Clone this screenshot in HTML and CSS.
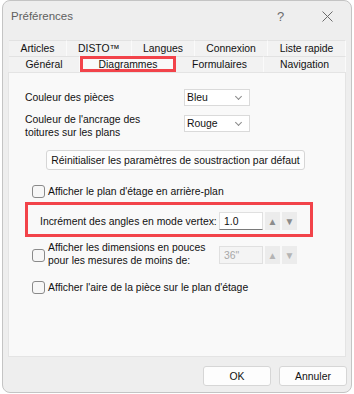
FILE: index.html
```html
<!DOCTYPE html>
<html>
<head>
    <title>Préférences</title>
    <link rel="stylesheet" href="styles.css">
</head>
<body>
    <div class="dialog">
        <div class="titlebar">
            <span class="title">Préférences</span>
            <span class="help">?</span>
            <span class="close">
                <svg width="11" height="11" viewBox="0 0 11 11"><path d="M0.5 0.5 L10.5 10.5 M10.5 0.5 L0.5 10.5" stroke="#6b6b6b" stroke-width="1" fill="none"/></svg>
            </span>
        </div>

        <div class="tabs">
            <div class="tab-row">
                <div class="tab w58">Articles</div>
                <div class="tab w65">DISTO™</div>
                <div class="tab w63">Langues</div>
                <div class="tab w73">Connexion</div>
                <div class="tab w78">Liste rapide</div>
            </div>
            <div class="tab-row">
                <div class="tab w71">Général</div>
                <div class="tab w96 active">Diagrammes</div>
                <div class="tab w88">Formulaires</div>
                <div class="tab w82">Navigation</div>
            </div>
        </div>

        <div class="panel">
            <div class="row row-first">
                <div class="label">Couleur des pièces</div>
                <div class="select">Bleu<span class="chev"></span></div>
            </div>
            <div class="row row-two">
                <div class="label">Couleur de l'ancrage des<br>toitures sur les plans</div>
                <div class="select">Rouge<span class="chev"></span></div>
            </div>
            <div class="btn-row">
                <div class="btn reset">Réinitialiser les paramètres de soustraction par défaut</div>
            </div>
            <div class="check check-one">
                <span class="box"></span>
                <span>Afficher le plan d'étage en arrière-plan</span>
            </div>
            <div class="highlight">
                <span class="spin-label">Incrément des angles en mode vertex:</span>
                <div class="spin-input">1.0</div>
                <div class="spin-btn">▲</div>
                <div class="spin-btn">▼</div>
            </div>
            <div class="check check-two">
                <span class="box"></span>
                <span class="two-lines">Afficher les dimensions en pouces<br>pour les mesures de moins de:</span>
                <div class="spin-input disabled">36"</div>
                <div class="spin-btn disabled">▲</div>
                <div class="spin-btn disabled">▼</div>
            </div>
            <div class="check check-three">
                <span class="box"></span>
                <span>Afficher l'aire de la pièce sur le plan d'étage</span>
            </div>
        </div>

        <div class="footer">
            <div class="btn footer-btn">OK</div>
            <div class="btn footer-btn">Annuler</div>
        </div>
    </div>
</body>
</html>
```

FILE: styles.css
```css
body {
    margin: 0;
    background: #ffffff;
    font-family: "Liberation Sans", Arial, sans-serif;
    font-size: 10.4px;
    color: #111111;
}
.dialog {
    margin: 0 2px;
    width: 348px;
    height: 391px;
    border: 1px solid #c4c4c4;
    border-radius: 8px;
    background: #eeeeee;
    overflow: hidden;
}
.titlebar {
    height: 30px;
    display: flex;
    align-items: center;
}
.title {
    margin-left: 8px;
    font-size: 11.5px;
    color: #606060;
    flex: 1;
}
.help {
    font-size: 13px;
    color: #6b6b6b;
    width: 10px;
    margin-right: 35px;
}
.close {
    display: flex;
    margin-right: 18px;
}
.tabs {
    margin: 9px 0 0 6px;
}
.tab-row {
    display: flex;
    height: 16px;
}
.tab {
    box-sizing: border-box;
    display: flex;
    align-items: center;
    justify-content: center;
    background: #f2f2f2;
    border-right: 1px solid #fafafa;
    border-top: 1px solid #e2e2e2;
}
.tab.active {
    background: #f9f9f9;
    border: 3px solid #f2434a;
    position: relative;
    z-index: 1;
}
.w58 { width: 58px; }
.w65 { width: 65px; }
.w63 { width: 63px; }
.w73 { width: 73px; }
.w78 { width: 78px; }
.w71 { width: 71px; }
.w96 { width: 96px; }
.w88 { width: 88px; }
.w82 { width: 82px; }

.panel {
    box-sizing: border-box;
    margin-left: 5px;
    width: 338px;
    height: 285px;
    background: #f9f9f9;
    border: 1px solid #e4e4e4;
    padding-left: 16px;
}
.row {
    display: flex;
    align-items: center;
}
.row-first {
    margin-top: 16px;
    height: 17px;
}
.row-two {
    margin-top: 7px;
    align-items: flex-start;
    line-height: 13px;
}
.row-two .select {
    margin-top: 2px;
}
.label {
    width: 159px;
}
.select {
    box-sizing: border-box;
    width: 66px;
    height: 17px;
    background: #ffffff;
    border: 1px solid #dadada;
    display: flex;
    align-items: center;
    padding-left: 2px;
    position: relative;
}
.chev {
    position: absolute;
    right: 8px;
    top: 4px;
    width: 4px;
    height: 4px;
    border-right: 1px solid #8a8a8a;
    border-bottom: 1px solid #8a8a8a;
    transform: rotate(45deg);
}
.btn-row {
    margin-top: 11px;
    padding-left: 21px;
}
.btn {
    box-sizing: border-box;
    height: 20px;
    background: #fdfdfd;
    border: 1px solid #d6d6d6;
    border-radius: 3px;
    display: flex;
    align-items: center;
    justify-content: center;
}
.reset {
    width: 259px;
}
.check {
    display: flex;
    align-items: center;
    padding-left: 7px;
}
.box {
    box-sizing: border-box;
    width: 13px;
    height: 13px;
    border: 1px solid #8a8a8a;
    border-radius: 3px;
    background: #f7f7f7;
    margin-right: 3px;
    flex: none;
}
.check-one {
    margin-top: 14px;
    height: 14px;
}
.highlight {
    box-sizing: border-box;
    margin-top: 4px;
    width: 288px;
    height: 35px;
    border: 3px solid #f2434a;
    display: flex;
    align-items: center;
    padding: 3px 0 0 12px;
}
.spin-label {
    width: 179px;
}
.spin-input {
    box-sizing: border-box;
    width: 44px;
    height: 18px;
    background: #ffffff;
    border: 1px solid #e0e0e0;
    border-bottom: 1px solid #7a7a7a;
    padding-left: 4px;
    display: flex;
    align-items: center;
}
.spin-input.disabled {
    background: #f4f4f4;
    border-bottom: 1px solid #e0e0e0;
    color: #a8a8a8;
}
.spin-btn {
    width: 15px;
    height: 18px;
    margin-left: 2px;
    background: #ececec;
    color: #8c8c8c;
    font-size: 10px;
    display: flex;
    align-items: center;
    justify-content: center;
}
.spin-btn.disabled {
    color: #b4b4b4;
}
.check-two {
    margin-top: 4px;
    height: 27px;
    align-items: flex-start;
}
.check-two .box {
    margin-top: 8px;
}
.two-lines {
    line-height: 13px;
    width: 171px;
}
.check-two .spin-input {
    margin-top: 5px;
}
.check-two .spin-btn {
    margin-top: 5px;
}
.check-three {
    margin-top: 12px;
    height: 14px;
}
.footer {
    display: flex;
    justify-content: flex-end;
    gap: 8px;
    margin: 9px 4px 0 0;
}
.footer-btn {
    width: 68px;
}
```
